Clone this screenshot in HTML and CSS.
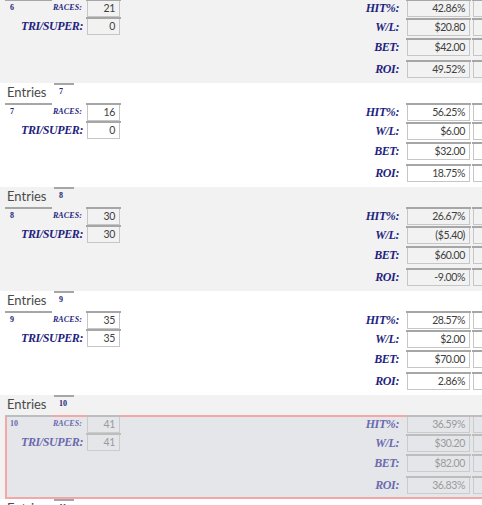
FILE: index.html
```html
<!DOCTYPE html>
<html lang="en">
<head>
  <meta charset="UTF-8">
  <title>Entries</title>
  <link rel="stylesheet" href="styles.css">
</head>
<body>
  <div class="list">

    <!-- record 6, header scrolled out of view -->
    <div class="rec alt">
      <div class="rec-body">
        <div class="left">
          <div class="num">6</div>
          <div class="lbl small">RACES:</div>
          <div class="field"><div class="box">21</div></div>
          <div class="lbl wide">TRI/SUPER:</div>
          <div class="field"><div class="box">0</div></div>
        </div>
        <div class="right">
          <div class="stat"><div class="lbl">HIT%:</div><div class="field"><div class="box">42.86%</div></div><div class="field"><div class="box"></div></div></div>
          <div class="stat"><div class="lbl">W/L:</div><div class="field"><div class="box">$20.80</div></div><div class="field"><div class="box"></div></div></div>
          <div class="stat"><div class="lbl">BET:</div><div class="field"><div class="box">$42.00</div></div><div class="field"><div class="box"></div></div></div>
          <div class="stat"><div class="lbl">ROI:</div><div class="field"><div class="box">49.52%</div></div><div class="field"><div class="box"></div></div></div>
        </div>
      </div>
    </div>

    <!-- record 7 -->
    <div class="rec">
      <div class="rec-head"><div class="title">Entries</div><div class="head-num">7</div></div>
      <div class="rec-body">
        <div class="left">
          <div class="num">7</div>
          <div class="lbl small">RACES:</div>
          <div class="field"><div class="box">16</div></div>
          <div class="lbl wide">TRI/SUPER:</div>
          <div class="field"><div class="box">0</div></div>
        </div>
        <div class="right">
          <div class="stat"><div class="lbl">HIT%:</div><div class="field"><div class="box">56.25%</div></div><div class="field"><div class="box"></div></div></div>
          <div class="stat"><div class="lbl">W/L:</div><div class="field"><div class="box">$6.00</div></div><div class="field"><div class="box"></div></div></div>
          <div class="stat"><div class="lbl">BET:</div><div class="field"><div class="box">$32.00</div></div><div class="field"><div class="box"></div></div></div>
          <div class="stat"><div class="lbl">ROI:</div><div class="field"><div class="box">18.75%</div></div><div class="field"><div class="box"></div></div></div>
        </div>
      </div>
    </div>

    <!-- record 8 -->
    <div class="rec alt">
      <div class="rec-head"><div class="title">Entries</div><div class="head-num">8</div></div>
      <div class="rec-body">
        <div class="left">
          <div class="num">8</div>
          <div class="lbl small">RACES:</div>
          <div class="field"><div class="box">30</div></div>
          <div class="lbl wide">TRI/SUPER:</div>
          <div class="field"><div class="box">30</div></div>
        </div>
        <div class="right">
          <div class="stat"><div class="lbl">HIT%:</div><div class="field"><div class="box">26.67%</div></div><div class="field"><div class="box"></div></div></div>
          <div class="stat"><div class="lbl">W/L:</div><div class="field"><div class="box">($5.40)</div></div><div class="field"><div class="box"></div></div></div>
          <div class="stat"><div class="lbl">BET:</div><div class="field"><div class="box">$60.00</div></div><div class="field"><div class="box"></div></div></div>
          <div class="stat"><div class="lbl">ROI:</div><div class="field"><div class="box">-9.00%</div></div><div class="field"><div class="box"></div></div></div>
        </div>
      </div>
    </div>

    <!-- record 9 -->
    <div class="rec">
      <div class="rec-head"><div class="title">Entries</div><div class="head-num">9</div></div>
      <div class="rec-body">
        <div class="left">
          <div class="num">9</div>
          <div class="lbl small">RACES:</div>
          <div class="field"><div class="box">35</div></div>
          <div class="lbl wide">TRI/SUPER:</div>
          <div class="field"><div class="box">35</div></div>
        </div>
        <div class="right">
          <div class="stat"><div class="lbl">HIT%:</div><div class="field"><div class="box">28.57%</div></div><div class="field"><div class="box"></div></div></div>
          <div class="stat"><div class="lbl">W/L:</div><div class="field"><div class="box">$2.00</div></div><div class="field"><div class="box"></div></div></div>
          <div class="stat"><div class="lbl">BET:</div><div class="field"><div class="box">$70.00</div></div><div class="field"><div class="box"></div></div></div>
          <div class="stat"><div class="lbl">ROI:</div><div class="field"><div class="box">2.86%</div></div><div class="field"><div class="box"></div></div></div>
        </div>
      </div>
    </div>

    <!-- record 10 (selected) -->
    <div class="rec alt sel">
      <div class="rec-head"><div class="title">Entries</div><div class="head-num">10</div></div>
      <div class="rec-body">
        <div class="left">
          <div class="num">10</div>
          <div class="lbl small">RACES:</div>
          <div class="field"><div class="box">41</div></div>
          <div class="lbl wide">TRI/SUPER:</div>
          <div class="field"><div class="box">41</div></div>
        </div>
        <div class="right">
          <div class="stat"><div class="lbl">HIT%:</div><div class="field"><div class="box">36.59%</div></div><div class="field"><div class="box"></div></div></div>
          <div class="stat"><div class="lbl">W/L:</div><div class="field"><div class="box">$30.20</div></div><div class="field"><div class="box"></div></div></div>
          <div class="stat"><div class="lbl">BET:</div><div class="field"><div class="box">$82.00</div></div><div class="field"><div class="box"></div></div></div>
          <div class="stat"><div class="lbl">ROI:</div><div class="field"><div class="box">36.83%</div></div><div class="field"><div class="box"></div></div></div>
        </div>
      </div>
    </div>

    <!-- record 11, only the header shows -->
    <div class="rec">
      <div class="rec-head"><div class="title">Entries</div><div class="head-num">11</div></div>
    </div>

  </div>
</body>
</html>
```

FILE: styles.css
```css
html,
body {
  margin: 0;
  padding: 0;
  overflow: hidden;
}

body {
  background-color: #ffffff;
  font-family: "Liberation Serif", serif;
}

/* the form is wider than the window, scrolled down a bit */
.list {
  width: 560px;
  margin-top: -1px;
}

.rec {
  background-color: #ffffff;
}

.rec.alt {
  background-color: #f2f2f2;
}

.rec-head {
  height: 20px;
  display: flex;
  align-items: flex-start;
}

.title {
  width: 54px;
  padding-left: 7px;
  box-sizing: border-box;
  font-family: Lato, sans-serif;
  font-size: 13px;
  line-height: 18px;
  color: #4a4a4a;
}

.head-num {
  width: 20px;
  box-sizing: border-box;
  border-top: 2px solid #a6a6a6;
  padding-left: 5px;
  font-weight: bold;
  font-size: 8px;
  line-height: 14px;
  color: #1f1f7c;
}

.rec-body {
  height: 84px;
  display: flex;
  padding-left: 5px;
}

.left {
  display: grid;
  grid-template-columns: 47px 34px 35px;
  grid-auto-rows: 18px;
  align-content: start;
}

.num {
  border-top: 2px solid #a6a6a6;
  padding-left: 5px;
  font-weight: bold;
  font-size: 8px;
  line-height: 14px;
  color: #1f1f7c;
}

.lbl {
  font-style: italic;
  font-weight: bold;
  font-size: 12px;
  line-height: 18px;
  letter-spacing: -0.4px;
  color: #1f1f80;
  text-align: right;
  white-space: nowrap;
}

.left .lbl {
  padding-right: 4px;
}

.lbl.small {
  font-size: 8px;
  letter-spacing: 0.1px;
}

.lbl.wide {
  grid-column: 1 / 3;
  padding-right: 3px;
}

.field {
  height: 18px;
  box-sizing: border-box;
  border-top: 2px solid #a6a6a6;
  padding: 0 1px;
}

.box {
  height: 16px;
  box-sizing: border-box;
  border: 1px solid #c6c6c6;
  border-top: none;
  padding-right: 4px;
  text-align: right;
  font-family: Lato, sans-serif;
  font-size: 10.5px;
  line-height: 15px;
  letter-spacing: -0.4px;
  color: #404040;
  overflow: hidden;
}

.right {
  margin-left: 224px;
  display: flex;
  flex-direction: column;
}

.stat {
  display: grid;
  grid-template-columns: 60px 65px 65px;
  column-gap: 1px;
  height: 18px;
}

.stat .lbl {
  padding-right: 6px;
}

.stat:nth-child(2) {
  margin-top: 1px;
}

.stat:nth-child(3) {
  margin-top: 2px;
}

.stat:nth-child(4) {
  margin-top: 4px;
}

/* selected record */
.rec.sel .rec-body {
  margin-left: 5px;
  padding-left: 0;
  background-color: #e5e6ea;
  box-shadow: inset 0 0 0 2px #f4a7a9;
}

.rec.sel .rec-body .lbl,
.rec.sel .rec-body .num {
  color: #6a6aae;
}

.rec.sel .rec-body .box {
  color: #9a9a9a;
  border-color: #cbcbcb;
}

.rec.sel .rec-body .field,
.rec.sel .rec-body .num {
  border-top-color: #bdbdbd;
}
```
